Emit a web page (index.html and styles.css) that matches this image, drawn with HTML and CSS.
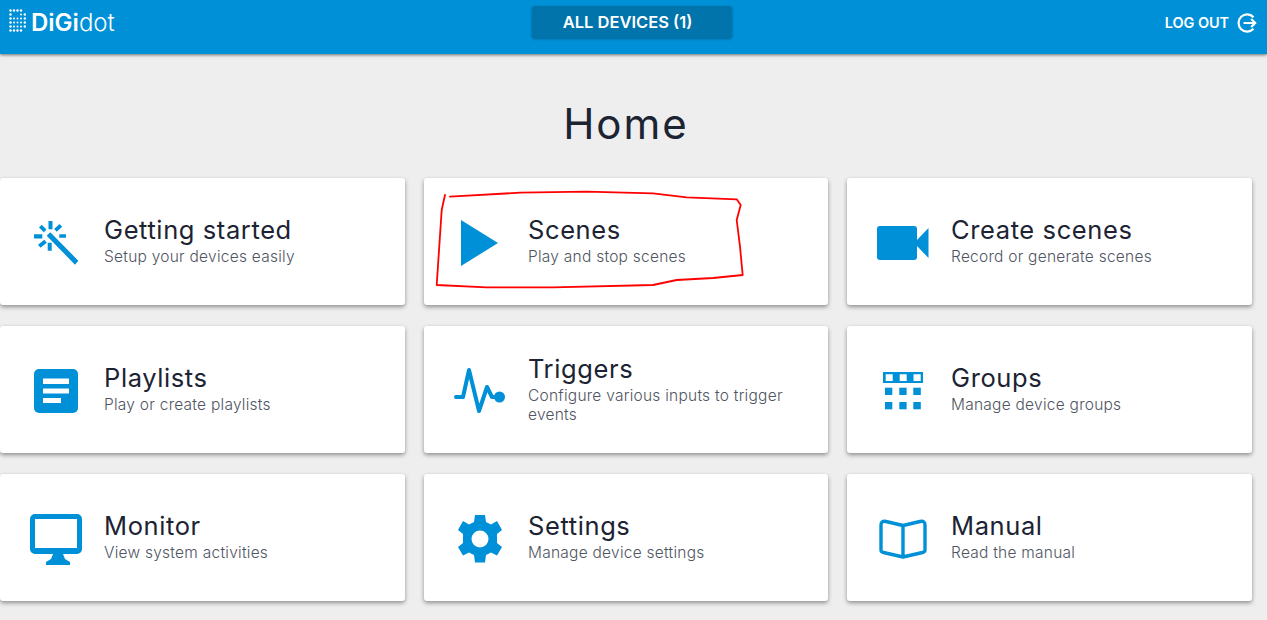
FILE: index.html
```html
<!DOCTYPE html>
<html lang="en">
<head>
<meta charset="utf-8">
<title>DiGidot Home</title>
<link rel="stylesheet" href="styles.css">
</head>
<body>
<header class="topbar">
  <a class="logo">
    <svg class="logo-mark" width="18" height="24" viewBox="0 0 18 24" fill="#fff">
      <circle cx="1.5" cy="1.5" r="1.2"/><circle cx="5" cy="1.5" r="1.2"/><circle cx="8.5" cy="1.5" r="1.2"/><circle cx="12" cy="1.5" r="1.2"/>
      <circle cx="1.5" cy="5.5" r="1.2"/><circle cx="12" cy="5.5" r="1"/><circle cx="15.8" cy="5.5" r="1.2"/>
      <circle cx="1.5" cy="9.5" r="1.2"/><circle cx="5" cy="9.5" r="1"/><circle cx="8.5" cy="9.5" r="1"/><circle cx="12" cy="9.5" r="1"/><circle cx="15.8" cy="9.5" r="1.2"/>
      <circle cx="1.5" cy="13.5" r="1.2"/><circle cx="5" cy="13.5" r="1"/><circle cx="8.5" cy="13.5" r="1"/><circle cx="12" cy="13.5" r="1"/><circle cx="15.8" cy="13.5" r="1.2"/>
      <circle cx="1.5" cy="17.5" r="1.2"/><circle cx="5" cy="17.5" r="1"/><circle cx="8.5" cy="17.5" r="1"/><circle cx="12" cy="17.5" r="1"/><circle cx="15.8" cy="17.5" r="1.2"/>
      <circle cx="1.5" cy="21.5" r="1.2"/><circle cx="5" cy="21.5" r="1.2"/><circle cx="8.5" cy="21.5" r="1.2"/><circle cx="12" cy="21.5" r="1.2"/>
    </svg>
    <span class="logo-text"><b>DiGi</b>dot</span>
  </a>
  <button class="devices">ALL DEVICES (1)</button>
  <a class="logout">LOG OUT
    <svg width="20" height="20" viewBox="0 0 20 20" fill="none" stroke="#fff" stroke-width="2.2">
      <path d="M16.5 4.2A8.6 8.6 0 1 0 16.5 15.8"/>
      <path d="M6.5 10H18M14.2 6l4 4-4 4"/>
    </svg>
  </a>
</header>

<main class="page">
  <h1 class="heading">Home</h1>
  <section class="grid">
    <a class="card">
      <span class="icon">
        <svg width="45" height="44" viewBox="0 0 45 44" fill="#0090d7">
          <path d="M12.700 14.700L16.300 11.300 44.300 39.700 41 43.700z"/>
          <path d="M14.500 0h4v8.300h-4zM13.700 21.700h4v8h-4zM0 13.300h8.300v4.200H0zM25.300 13.300h6.700v3.500h-6.700z"/>
          <path d="M7.700 3.800l4.800 4.600-2.700 2.800-4.800-4.600zM25.500 3l2.700 2.800-5.400 5-2.700-2.800zM10.300 18.700l2.500 3-6.300 5-2.500-3z"/>
        </svg>
      </span>
      <span class="text"><span class="title">Getting started</span><span class="sub">Setup your devices easily</span></span>
    </a>
    <a class="card">
      <span class="icon">
        <svg width="38" height="46" viewBox="0 0 38 46" fill="#0090d7"><path d="M0 0l37 23L0 46z"/></svg>
      </span>
      <span class="text"><span class="title">Scenes</span><span class="sub">Play and stop scenes</span></span>
    </a>
    <a class="card">
      <span class="icon">
        <svg width="52" height="34" viewBox="0 0 52 34" fill="#0090d7"><rect x="0" y="0" width="40" height="34" rx="3"/><path d="M40 14L51.500 2v30L40 20z"/></svg>
      </span>
      <span class="text"><span class="title">Create scenes</span><span class="sub">Record or generate scenes</span></span>
    </a>
    <a class="card">
      <span class="icon">
        <svg width="44" height="44" viewBox="0 0 44 44"><rect width="44" height="44" rx="5" fill="#0090d7"/><path fill="#fff" d="M9 9.500h26v5.500H9zM9 19.500h26v5H9zM9 29h18v5H9z"/></svg>
      </span>
      <span class="text"><span class="title">Playlists</span><span class="sub">Play or create playlists</span></span>
    </a>
    <a class="card">
      <span class="icon">
        <svg width="52" height="48" viewBox="0 0 52 48" fill="none" stroke="#0090d7" stroke-width="4" stroke-linejoin="round" stroke-linecap="round">
          <path d="M2 30h7L15 3l10 41 8-24 5 10h8"/><circle cx="45.500" cy="30" r="5.500" fill="#0090d7" stroke="none"/>
        </svg>
      </span>
      <span class="text"><span class="title">Triggers</span><span class="sub">Configure various inputs to trigger events</span></span>
    </a>
    <a class="card">
      <span class="icon">
        <svg width="40" height="38" viewBox="0 0 40 38" fill="#0090d7">
          <path fill-rule="evenodd" d="M0 0h40v11H0zM2.700 2.300v6.700h7V2.300zM16.700 2.300v6.700h7V2.300zM30.500 2.300v6.700h7.200V2.300z"/>
          <rect x="2" y="15.700" width="7.300" height="7.300"/><rect x="16.300" y="15.700" width="7.300" height="7.300"/><rect x="30.300" y="15.700" width="7.500" height="7.300"/>
          <rect x="2" y="30" width="7.300" height="7.300"/><rect x="16.300" y="30" width="7.300" height="7.300"/><rect x="30.300" y="30" width="7.500" height="7.300"/>
        </svg>
      </span>
      <span class="text"><span class="title">Groups</span><span class="sub">Manage device groups</span></span>
    </a>
    <a class="card">
      <span class="icon">
        <svg width="52" height="51" viewBox="0 0 52 51"><path fill-rule="evenodd" fill="#0090d7" d="M5 0h42a5 5 0 0 1 5 5v30a5 5 0 0 1-5 5H33l2 5 5 3v3H16v-3l5-3 2-5H5a5 5 0 0 1-5-5V5a5 5 0 0 1 5-5zM5 5v29h42V5z"/></svg>
      </span>
      <span class="text"><span class="title">Monitor</span><span class="sub">View system activities</span></span>
    </a>
    <a class="card">
      <span class="icon">
        <svg width="48" height="48" viewBox="0 0 48 48"><path fill="#0090d7" fill-rule="evenodd" d="M19 0h10l1 7 5 2.500 6-3.500 5 9-5 4v9l5 4-5 8.500-6-3-5 2.500-1 7.500H19l-1-7.500-5-2.500-6 3-5-8.500 5-4v-9l-5-4 5-9 6 3.500 5-2.500zM24 15.500a8.500 8.500 0 1 0 0 17 8.500 8.500 0 0 0 0-17z"/></svg>
      </span>
      <span class="text"><span class="title">Settings</span><span class="sub">Manage device settings</span></span>
    </a>
    <a class="card">
      <span class="icon">
        <svg width="48" height="40" viewBox="0 0 48 40" fill="none" stroke="#0090d7" stroke-width="3.400" stroke-linejoin="round">
          <path d="M24 6.500L7 2.500Q2 1.500 2 6v25q0 2 2.500 2.500L24 38l19.500-4.500Q46 33 46 31V6q0-4.500-5-3.500zM24 6.500V38"/>
        </svg>
      </span>
      <span class="text"><span class="title">Manual</span><span class="sub">Read the manual</span></span>
    </a>
  </section>
  <svg class="markup" width="320" height="110" viewBox="0 0 320 110" fill="none" stroke="#f00" stroke-width="1.800" stroke-linejoin="round" stroke-linecap="round">
    <path d="M15 10L11.700 25 6.700 100 56.700 102.300 123 102.300 223 100 246.700 95 283 93 312.700 90 310 61.700 306.700 35 310.700 20 306.700 14.300 256.700 12.300 223 8.300 156.700 6.700 90 7.700 20 11.700"/>
  </svg>
</main>
</body>
</html>
```

FILE: styles.css
```css
* { box-sizing: border-box; }

html, body {
  margin: 0;
  height: 100%;
  overflow: hidden;
}

body {
  background: #eeeeee;
  color: #1c2333;
  font-family: "Inter", "Liberation Sans", sans-serif;
}

.topbar {
  height: 54px;
  background: #0090d7;
  box-shadow: 0 1px 3px rgba(0, 0, 0, 0.55);
  display: flex;
  align-items: flex-start;
  position: relative;
  color: #fff;
}

.logo {
  display: flex;
  align-items: flex-start;
  gap: 4px;
  padding: 9px 0 0 9px;
  width: 532px;
}

.logo-text {
  font-size: 24px;
  line-height: 28px;
  font-weight: 300;
}

.logo-text b { font-weight: 600; }

.devices {
  width: 200px;
  height: 32px;
  margin-top: 6px;
  padding: 0 9px 0 0;
  border: 0;
  border-radius: 3px;
  background: #0074ab;
  box-shadow: 0 1px 3px rgba(0, 0, 0, 0.3);
  color: #fff;
  font: 600 16.500px/30px "Inter", "Liberation Sans", sans-serif;
}

.logout {
  margin-left: auto;
  margin-right: 10px;
  margin-top: 13px;
  display: flex;
  align-items: center;
  gap: 8px;
  font-size: 14.500px;
  font-weight: 600;
  letter-spacing: -0.1px;
  line-height: 20px;
}

.page {
  position: relative;
  width: 1252px;
}

.heading {
  margin: 0;
  padding-top: 42px;
  height: 124px;
  text-align: center;
  font-size: 42px;
  line-height: 56px;
  font-weight: 400;
  letter-spacing: 2px;
}

.grid {
  display: grid;
  grid-template-columns: 405px 404px 405px;
  grid-auto-rows: 127px;
  column-gap: 19px;
  row-gap: 21px;
}

.card {
  display: flex;
  align-items: center;
  background: #fff;
  border-radius: 3px;
  box-shadow: 0 2px 4px rgba(0, 0, 0, 0.4);
}

.icon {
  flex: 0 0 104px;
  display: flex;
  justify-content: center;
  align-items: center;
  padding: 3px 0 0 8px;
}

.text {
  display: flex;
  flex-direction: column;
  min-width: 0;
  padding: 0 30px 4px 0;
}

.title {
  font-size: 25.500px;
  line-height: 34px;
  letter-spacing: 0.6px;
}

.sub {
  font-size: 15.500px;
  line-height: 19px;
  font-weight: 300;
  color: #4f5562;
  letter-spacing: 0.25px;
}

.markup {
  position: absolute;
  left: 430px;
  top: 131px;
  pointer-events: none;
}
```
